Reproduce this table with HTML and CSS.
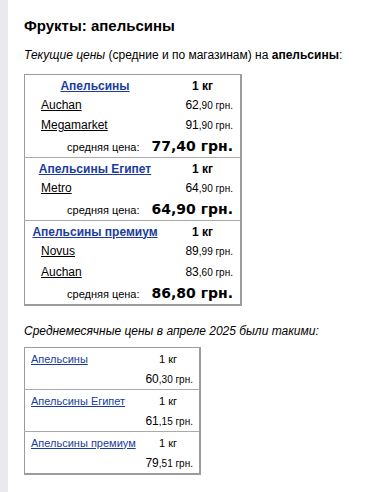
FILE: index.html
```html
<!DOCTYPE html>
<html lang="ru">
<head>
    <meta charset="UTF-8">
    <meta name="viewport" content="width=device-width, initial-scale=1.0">
    <title>Фрукты: апельсины</title>
    <link rel="stylesheet" href="styles.css">
</head>
<body>
    <div class="sidebar"></div>
    <div class="content">
        <h1 class="title">Фрукты: апельсины</h1>
        <p class="intro"><i>Текущие цены</i> (средние и по магазинам) на <b>апельсины</b>:</p>

        <table class="prices">
            <tbody class="group">
                <tr class="head">
                    <td class="name"><a href="#">Апельсины</a></td>
                    <td class="unit">1 кг</td>
                </tr>
                <tr>
                    <td class="shop"><a href="#">Auchan</a></td>
                    <td class="price">62<small>,90 грн.</small></td>
                </tr>
                <tr>
                    <td class="shop"><a href="#">Megamarket</a></td>
                    <td class="price">91<small>,90 грн.</small></td>
                </tr>
                <tr class="avg">
                    <td colspan="2"><span class="avg-label">средняя цена:</span><span class="avg-value">77,40 грн.</span></td>
                </tr>
            </tbody>
            <tbody class="group">
                <tr class="head">
                    <td class="name"><a href="#">Апельсины Египет</a></td>
                    <td class="unit">1 кг</td>
                </tr>
                <tr>
                    <td class="shop"><a href="#">Metro</a></td>
                    <td class="price">64<small>,90 грн.</small></td>
                </tr>
                <tr class="avg">
                    <td colspan="2"><span class="avg-label">средняя цена:</span><span class="avg-value">64,90 грн.</span></td>
                </tr>
            </tbody>
            <tbody class="group">
                <tr class="head">
                    <td class="name"><a href="#">Апельсины премиум</a></td>
                    <td class="unit">1 кг</td>
                </tr>
                <tr>
                    <td class="shop"><a href="#">Novus</a></td>
                    <td class="price">89<small>,99 грн.</small></td>
                </tr>
                <tr class="tall">
                    <td class="shop"><a href="#">Auchan</a></td>
                    <td class="price">83<small>,60 грн.</small></td>
                </tr>
                <tr class="avg">
                    <td colspan="2"><span class="avg-label">средняя цена:</span><span class="avg-value">86,80 грн.</span></td>
                </tr>
            </tbody>
        </table>

        <p class="intro intro-month"><i>Среднемесячные цены в апреле 2025 были такими:</i></p>

        <table class="monthly">
            <tbody class="group">
                <tr class="item">
                    <td class="name"><a href="#">Апельсины</a></td>
                    <td class="unit">1 кг</td>
                </tr>
                <tr>
                    <td colspan="2" class="price">60<small>,30 грн.</small></td>
                </tr>
            </tbody>
            <tbody class="group">
                <tr class="item">
                    <td class="name"><a href="#">Апельсины Египет</a></td>
                    <td class="unit">1 кг</td>
                </tr>
                <tr>
                    <td colspan="2" class="price">61<small>,15 грн.</small></td>
                </tr>
            </tbody>
            <tbody class="group">
                <tr class="item">
                    <td class="name"><a href="#">Апельсины премиум</a></td>
                    <td class="unit">1 кг</td>
                </tr>
                <tr>
                    <td colspan="2" class="price">79<small>,51 грн.</small></td>
                </tr>
            </tbody>
        </table>
    </div>
</body>
</html>
```

FILE: styles.css
```css
body {
    margin: 0;
    display: flex;
    min-height: 100vh;
    background-color: #fff;
    font-family: 'Liberation Sans', Arial, sans-serif;
    font-size: 12px;
    color: #000;
}

.sidebar {
    width: 8px;
    flex-shrink: 0;
    background-color: #e9e9ef;
}

.content {
    padding: 17px 16px 0 16px;
}

.title {
    margin: 0 0 14px 0;
    font-size: 15px;
    font-weight: bold;
}

.intro {
    margin: 0 0 12px 0;
    font-size: 12px;
}

.intro-month {
    margin-bottom: 9px;
}

table {
    border-collapse: collapse;
    border-style: solid;
    border-color: #9c9c9c;
    border-width: 1px 2px 2px 1px;
}

td {
    padding: 0;
    height: 20px;
    white-space: nowrap;
}

.group + .group {
    border-top: 1px solid #aaa;
}

a {
    color: #000;
}

/* current prices */

.prices {
    width: 218px;
    margin-bottom: 18px;
}

.prices .head td {
    height: 19px;
    padding-top: 1px;
}

.prices .tall td {
    height: 21px;
}

.prices .head .name {
    text-align: center;
    font-weight: bold;
    font-size: 12px;
    padding-left: 4px;
    padding-right: 4px;
}

.prices .head .name a {
    color: #1b3c9b;
}

.prices .unit {
    width: 75px;
    text-align: center;
    font-weight: bold;
}

.prices .shop {
    padding-left: 16px;
}

.price {
    text-align: right;
    padding-right: 7px;
    font-size: 12px;
}

.price small {
    font-size: 10px;
}

.avg td {
    height: 22px;
    text-align: right;
    padding-right: 7px;
}

.avg-label {
    font-size: 11px;
    margin-right: 12px;
}

.avg-value {
    font-family: 'DejaVu Sans', Verdana, sans-serif;
    font-size: 14px;
    font-weight: bold;
}

/* monthly averages */

.monthly {
    width: 177px;
}

.monthly td {
    height: 20px;
}

.monthly .item td {
    height: 21px;
}

.monthly .name {
    padding-left: 6px;
    font-size: 11px;
}

.monthly .name a {
    color: #1b3c9b;
}

.monthly .unit {
    text-align: center;
    width: 62px;
    font-size: 11px;
}

.monthly .price {
    padding-right: 6px;
    font-size: 12px;
}
```
